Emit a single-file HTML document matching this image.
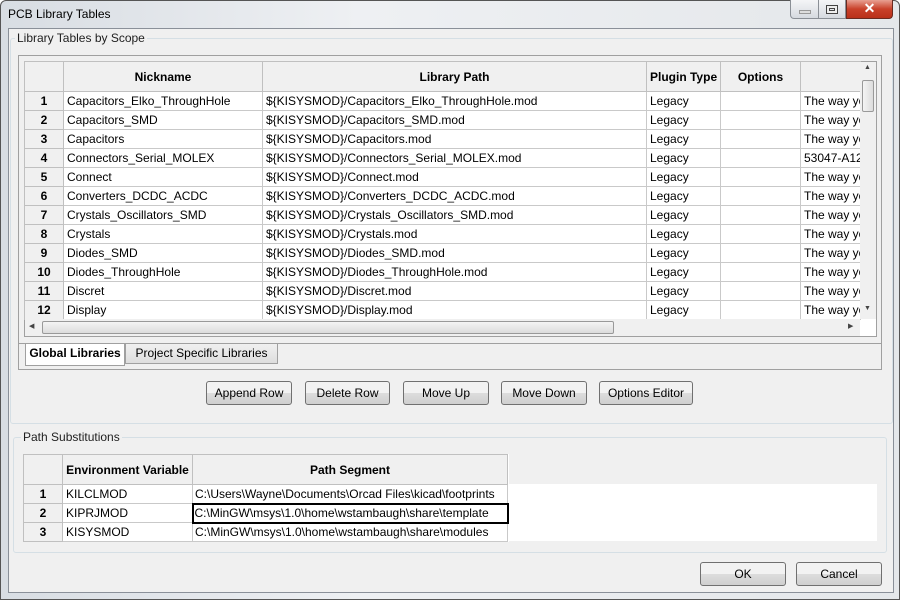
<!DOCTYPE html>
<html><head><meta charset="utf-8"><style>
*{box-sizing:border-box;margin:0;padding:0}
body{width:900px;height:600px;overflow:hidden;background:#fff;font-family:"Liberation Sans",sans-serif;font-size:12px;color:#000;position:relative}
.a{position:absolute}
.frame{left:0;top:0;width:900px;height:600px;background:linear-gradient(90deg,#d8dde3,#eef0f3 40%,#e4e7ea);border:1px solid #555;border-radius:6px 6px 0 0}
.client{left:8px;top:28px;width:886px;height:565px;background:#f0f0f0;border:1px solid #8a9099}
.grp{border:1px solid #d5dfe5;border-radius:3px}
.lbl{background:#f0f0f0;padding:0 2px;color:#1e1e1e}
table{border-collapse:collapse;table-layout:fixed;position:absolute;background:#fff}
td{border:1px solid #c9c9c9;height:19px;padding:0 3px;white-space:nowrap;overflow:hidden;font-size:12px}
td.h{background:#f0f0f0;text-align:center;font-weight:bold;height:30px;border-color:#c0c0c0}
td.r{background:#f0f0f0;text-align:center;font-weight:bold;border-color:#c0c0c0}
.btn{position:absolute;height:24px;border:1px solid #707070;border-radius:3px;background:linear-gradient(#f2f2f2 50%,#dddddd 50%,#cfcfcf);text-align:center;line-height:22px;font-size:12px}
</style></head><body>
<div class="a frame"></div>
<div class="a" style="left:8px;top:7px;font-size:12px">PCB Library Tables</div>
<div class="a" style="left:790px;top:0;width:56px;height:19px;border:1px solid #8a8f96;border-top:none;border-radius:0 0 0 4px;background:linear-gradient(#f4f5f7,#d6dae0)"></div>
<div class="a" style="left:818px;top:0;width:1px;height:19px;background:#8a8f96"></div>
<div class="a" style="left:799px;top:10px;width:12px;height:4px;border:1px solid #999;background:#ddd"></div>
<div class="a" style="left:826px;top:5px;width:12px;height:9px;border:1px solid #444;box-shadow:inset 0 0 0 2px #eee,inset 0 0 0 3px #444"></div>
<div class="a" style="left:846px;top:0;width:47px;height:19px;border:1px solid #6a2a20;border-top:none;border-radius:0 0 4px 0;background:linear-gradient(#e8a092,#c9412a 50%,#b93019);color:#fff;font-weight:bold;text-align:center;font-size:14px;line-height:17px">✕</div>
<div class="a client"></div>
<div class="a grp" style="left:10px;top:38px;width:883px;height:386px"></div>
<div class="a lbl" style="left:15px;top:31px">Library Tables by Scope</div>
<div class="a" style="left:18px;top:55px;width:864px;height:315px;border:1px solid #a0a0a0;background:#f0f0f0"></div>
<div class="a" style="left:19px;top:343px;width:862px;height:1px;background:#a0a0a0"></div>
<div class="a" style="left:24px;top:61px;width:853px;height:276px;border:1px solid #a0a0a0;background:#fff"></div>
<table style="left:24px;top:61px;width:836px">
<colgroup><col style="width:39px"><col style="width:199px"><col style="width:384px"><col style="width:74px"><col style="width:80px"><col style="width:60px"></colgroup>
<tr><td class="h"></td><td class="h">Nickname</td><td class="h">Library Path</td><td class="h">Plugin Type</td><td class="h">Options</td><td class="h"></td></tr>
<tr><td class="r">1</td><td>Capacitors_Elko_ThroughHole</td><td>${KISYSMOD}/Capacitors_Elko_ThroughHole.mod</td><td>Legacy</td><td></td><td>The way yo</td></tr>
<tr><td class="r">2</td><td>Capacitors_SMD</td><td>${KISYSMOD}/Capacitors_SMD.mod</td><td>Legacy</td><td></td><td>The way yo</td></tr>
<tr><td class="r">3</td><td>Capacitors</td><td>${KISYSMOD}/Capacitors.mod</td><td>Legacy</td><td></td><td>The way yo</td></tr>
<tr><td class="r">4</td><td>Connectors_Serial_MOLEX</td><td>${KISYSMOD}/Connectors_Serial_MOLEX.mod</td><td>Legacy</td><td></td><td>53047-A12</td></tr>
<tr><td class="r">5</td><td>Connect</td><td>${KISYSMOD}/Connect.mod</td><td>Legacy</td><td></td><td>The way yo</td></tr>
<tr><td class="r">6</td><td>Converters_DCDC_ACDC</td><td>${KISYSMOD}/Converters_DCDC_ACDC.mod</td><td>Legacy</td><td></td><td>The way yo</td></tr>
<tr><td class="r">7</td><td>Crystals_Oscillators_SMD</td><td>${KISYSMOD}/Crystals_Oscillators_SMD.mod</td><td>Legacy</td><td></td><td>The way yo</td></tr>
<tr><td class="r">8</td><td>Crystals</td><td>${KISYSMOD}/Crystals.mod</td><td>Legacy</td><td></td><td>The way yo</td></tr>
<tr><td class="r">9</td><td>Diodes_SMD</td><td>${KISYSMOD}/Diodes_SMD.mod</td><td>Legacy</td><td></td><td>The way yo</td></tr>
<tr><td class="r">10</td><td>Diodes_ThroughHole</td><td>${KISYSMOD}/Diodes_ThroughHole.mod</td><td>Legacy</td><td></td><td>The way yo</td></tr>
<tr><td class="r">11</td><td>Discret</td><td>${KISYSMOD}/Discret.mod</td><td>Legacy</td><td></td><td>The way yo</td></tr>
<tr><td class="r">12</td><td>Display</td><td>${KISYSMOD}/Display.mod</td><td>Legacy</td><td></td><td>The way yo</td></tr>
</table>
<div class="a" style="left:25px;top:319px;width:835px;height:17px;background:#f0f0f0"></div>
<div class="a" style="left:860px;top:62px;width:16px;height:257px;background:#f0f0f0"></div>
<div class="a" style="left:862px;top:80px;width:12px;height:32px;border:1px solid #999;border-radius:2px;background:linear-gradient(90deg,#f4f4f4,#dcdcdc)"></div>
<div class="a" style="left:864px;top:64px;font-size:7px;color:#444">▲</div>
<div class="a" style="left:864px;top:305px;font-size:7px;color:#444">▼</div>
<div class="a" style="left:42px;top:321px;width:572px;height:13px;border:1px solid #999;border-radius:2px;background:linear-gradient(#f4f4f4,#dcdcdc)"></div>
<div class="a" style="left:29px;top:322px;font-size:7px;color:#444">◀</div>
<div class="a" style="left:848px;top:322px;font-size:7px;color:#444">▶</div>
<div class="a" style="left:25px;top:344px;width:100px;height:22px;background:#fff;border:1px solid #a0a0a0;border-top:none;font-weight:bold;text-align:center;line-height:19px">Global Libraries</div>
<div class="a" style="left:125px;top:344px;width:153px;height:20px;background:linear-gradient(#f0f0f0,#dedede);border:1px solid #a0a0a0;border-top:none;text-align:center;line-height:18px">Project Specific Libraries</div>
<div class="btn" style="left:206px;top:381px;width:86px">Append Row</div>
<div class="btn" style="left:305px;top:381px;width:85px">Delete Row</div>
<div class="btn" style="left:403px;top:381px;width:86px">Move Up</div>
<div class="btn" style="left:501px;top:381px;width:86px">Move Down</div>
<div class="btn" style="left:599px;top:381px;width:94px">Options Editor</div>
<div class="a grp" style="left:13px;top:437px;width:874px;height:116px"></div>
<div class="a lbl" style="left:21px;top:430px">Path Substitutions</div>
<div class="a" style="left:23px;top:484px;width:854px;height:57px;background:#fff"></div>
<table style="left:23px;top:454px;width:484px">
<colgroup><col style="width:39px"><col style="width:130px"><col style="width:315px"></colgroup>
<tr><td class="h"></td><td class="h">Environment Variable</td><td class="h">Path Segment</td></tr>
<tr><td class="r">1</td><td>KILCLMOD</td><td style="padding-left:2px">C:\Users\Wayne\Documents\Orcad Files\kicad\footprints</td></tr>
<tr><td class="r">2</td><td>KIPRJMOD</td><td style="border:2px solid #000;padding-left:1px">C:\MinGW\msys\1.0\home\wstambaugh\share\template</td></tr>
<tr><td class="r">3</td><td>KISYSMOD</td><td style="padding-left:2px">C:\MinGW\msys\1.0\home\wstambaugh\share\modules</td></tr>
</table>
<div class="btn" style="left:700px;top:562px;width:86px">OK</div>
<div class="btn" style="left:796px;top:562px;width:86px">Cancel</div>
</body></html>
